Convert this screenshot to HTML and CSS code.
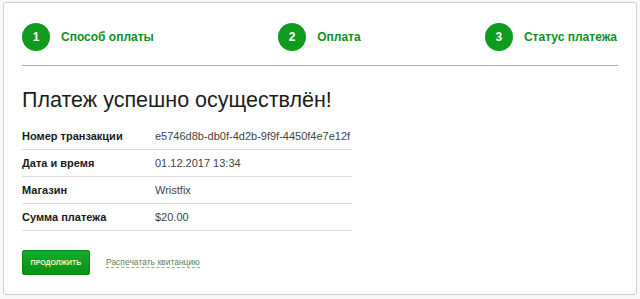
FILE: index.html
```html
<!DOCTYPE html>
<html lang="ru">
<head>
<meta charset="utf-8">
<link rel="stylesheet" href="styles.css">
</head>
<body>
<div class="card">
  <div class="steps">
    <div class="step"><span class="num">1</span><span class="label">Способ оплаты</span></div>
    <div class="step"><span class="num">2</span><span class="label">Оплата</span></div>
    <div class="step"><span class="num">3</span><span class="label">Статус платежа</span></div>
  </div>
  <div class="rule"></div>
  <h1 class="title">Платеж успешно осуществлён!</h1>
  <table class="info">
    <tr><th>Номер транзакции</th><td>e5746d8b-db0f-4d2b-9f9f-4450f4e7e12f</td></tr>
    <tr><th>Дата и время</th><td>01.12.2017 13:34</td></tr>
    <tr><th>Магазин</th><td>Wristfix</td></tr>
    <tr><th>Сумма платежа</th><td>$20.00</td></tr>
  </table>
  <div class="actions">
    <button class="btn">ПРОДОЛЖИТЬ</button>
    <a class="print" href="#">Распечатать квитанцию</a>
  </div>
</div>
</body>
</html>
```

FILE: styles.css
```css
html, body {
  margin: 0;
  padding: 0;
}
body {
  background: #f6f9f5;
  font-family: "Liberation Sans", Arial, sans-serif;
  width: 640px;
  height: 299px;
  overflow: hidden;
}
.card {
  margin: 2px 0 0 3px;
  width: 632px;
  height: 291px;
  background: #fff;
  border: 1px solid #cfcfcf;
  border-radius: 3px;
  box-sizing: content-box;
  padding: 0;
}
.steps {
  display: flex;
  justify-content: space-between;
  margin: 20px 19px 0 18px;
  height: 28px;
}
.step {
  display: flex;
  align-items: center;
}
.num {
  width: 28px;
  height: 28px;
  border-radius: 50%;
  background: #0f9b1d;
  color: #fff;
  font-weight: bold;
  font-size: 12px;
  display: flex;
  align-items: center;
  justify-content: center;
}
.label {
  margin-left: 11px;
  color: #13901e;
  font-weight: bold;
  font-size: 12px;
}
.rule {
  margin: 14px 18px 0 18px;
  height: 1px;
  background: #ababab;
}
.title {
  margin: 21px 0 0 18px;
  font-weight: normal;
  font-size: 21.5px;
  line-height: 26px;
  color: #1d1d1d;
}
.info {
  margin: 10px 0 0 18px;
  border-collapse: collapse;
  width: 330px;
}
.info th, .info td {
  height: 26px;
  padding: 0;
  border-bottom: 1px solid #dcdcdc;
  vertical-align: middle;
  text-align: left;
  white-space: nowrap;
}
.info th {
  width: 133px;
  font-weight: bold;
  font-size: 11px;
  color: #1a1a1a;
}
.info td {
  font-size: 11px;
  color: #444;
}
.actions {
  display: flex;
  align-items: center;
  margin: 19px 0 0 18px;
}
.btn {
  width: 68px;
  height: 25px;
  border: 1px solid #0b8a16;
  border-radius: 2px;
  background: linear-gradient(#17ad2a, #0a8f16);
  color: #e9f5c8;
  font-family: "Liberation Sans", Arial, sans-serif;
  font-weight: bold;
  font-size: 7px;
  padding: 0;
}
.print {
  margin-left: 16px;
  font-size: 8.5px;
  color: #5c7f5a;
  text-decoration: none;
  border-bottom: 1px dashed #8fae8c;
  line-height: 10px;
}
```
